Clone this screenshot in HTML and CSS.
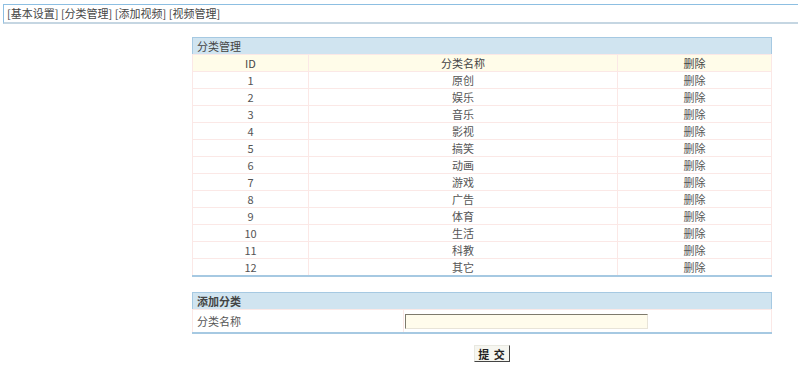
FILE: index.html
```html
<!DOCTYPE html>
<html>
<head>
<meta charset="utf-8">
<link rel="stylesheet" href="styles.css">
</head>
<body>
<div class="topbar">[基本设置] [分类管理] [添加视频] [视频管理]</div>
<div class="content">
  <table class="grid">
    <tr class="caption"><td colspan="3">分类管理</td></tr>
    <tr class="head"><td class="c1">ID</td><td class="c2">分类名称</td><td class="c3">删除</td></tr>
    <tr><td>1</td><td>原创</td><td>删除</td></tr>
    <tr><td>2</td><td>娱乐</td><td>删除</td></tr>
    <tr><td>3</td><td>音乐</td><td>删除</td></tr>
    <tr><td>4</td><td>影视</td><td>删除</td></tr>
    <tr><td>5</td><td>搞笑</td><td>删除</td></tr>
    <tr><td>6</td><td>动画</td><td>删除</td></tr>
    <tr><td>7</td><td>游戏</td><td>删除</td></tr>
    <tr><td>8</td><td>广告</td><td>删除</td></tr>
    <tr><td>9</td><td>体育</td><td>删除</td></tr>
    <tr><td>10</td><td>生活</td><td>删除</td></tr>
    <tr><td>11</td><td>科教</td><td>删除</td></tr>
    <tr><td>12</td><td>其它</td><td>删除</td></tr>
  </table>
  <table class="grid form">
    <tr class="caption"><td colspan="2" class="bold">添加分类</td></tr>
    <tr class="frow"><td class="label">分类名称</td><td class="field"><input class="text" type="text"></td></tr>
  </table>
  <div class="actions"><button class="btn">提&nbsp;交</button></div>
</div>
</body>
</html>
```
FILE: styles.css
```css
html, body { margin: 0; padding: 0; background: #fff; }
body {
  font-family: "Noto Sans CJK SC", "DejaVu Sans", sans-serif;
  font-size: 11px;
  color: #555;
}
.topbar {
  margin: 4px 0 0 3px;
  height: 17px;
  line-height: 17px;
  border-top: 1px solid #8dbfe2;
  border-left: 1px solid #8dbfe2;
  border-bottom: 2px solid #c5d6e2;
  padding-left: 3px;
  color: #444;
  white-space: nowrap;
}
.content {
  padding-left: 192px;
  padding-top: 13px;
}
.grid {
  width: 580px;
  border-collapse: collapse;
  border: 1px solid #a6c9e2;
  border-bottom: 2px solid #a6c9e2;
}
.grid td {
  height: 16px;
  padding: 0;
  line-height: 16px;
  text-align: center;
  border: 1px solid #fbe8e6;
}
.grid tr.caption td {
  background: #d0e4f0;
  text-align: left;
  padding-left: 4px;
  color: #444;
  border: none;
}
.grid td.bold { font-weight: bold; color: #333; }
.grid tr.head td { background: #fffce9; color: #444; }
.grid td.c1 { width: 115px; }
.grid td.c2 { width: 308px; }
.form { margin-top: 15px; }
.grid tr.frow td { height: 22px; }
.grid td.label { width: 206px; text-align: left; padding-left: 4px; }
.grid td.field { text-align: left; padding-left: 1px; }
.text {
  display: block;
  box-sizing: border-box;
  width: 243px;
  height: 15px;
  margin: 0;
  padding: 0;
  background: #fffcec;
  border: 1px solid;
  border-color: #7e7a6c #e8e4d8 #e8e4d8 #7e7a6c;
}
.actions {
  width: 580px;
  display: flex;
  justify-content: center;
  padding-top: 11px;
}
.btn {
  box-sizing: border-box;
  width: 36px;
  height: 17px;
  margin-left: 20px;
  padding: 0;
  font-family: "Noto Sans CJK SC", sans-serif;
  font-size: 11px;
  line-height: 14px;
  font-weight: bold;
  letter-spacing: 1px;
  color: #222;
  background: #f6f6f0;
  border: 1px solid;
  border-color: #e8e8e0 #444 #444 #e8e8e0;
}
```
